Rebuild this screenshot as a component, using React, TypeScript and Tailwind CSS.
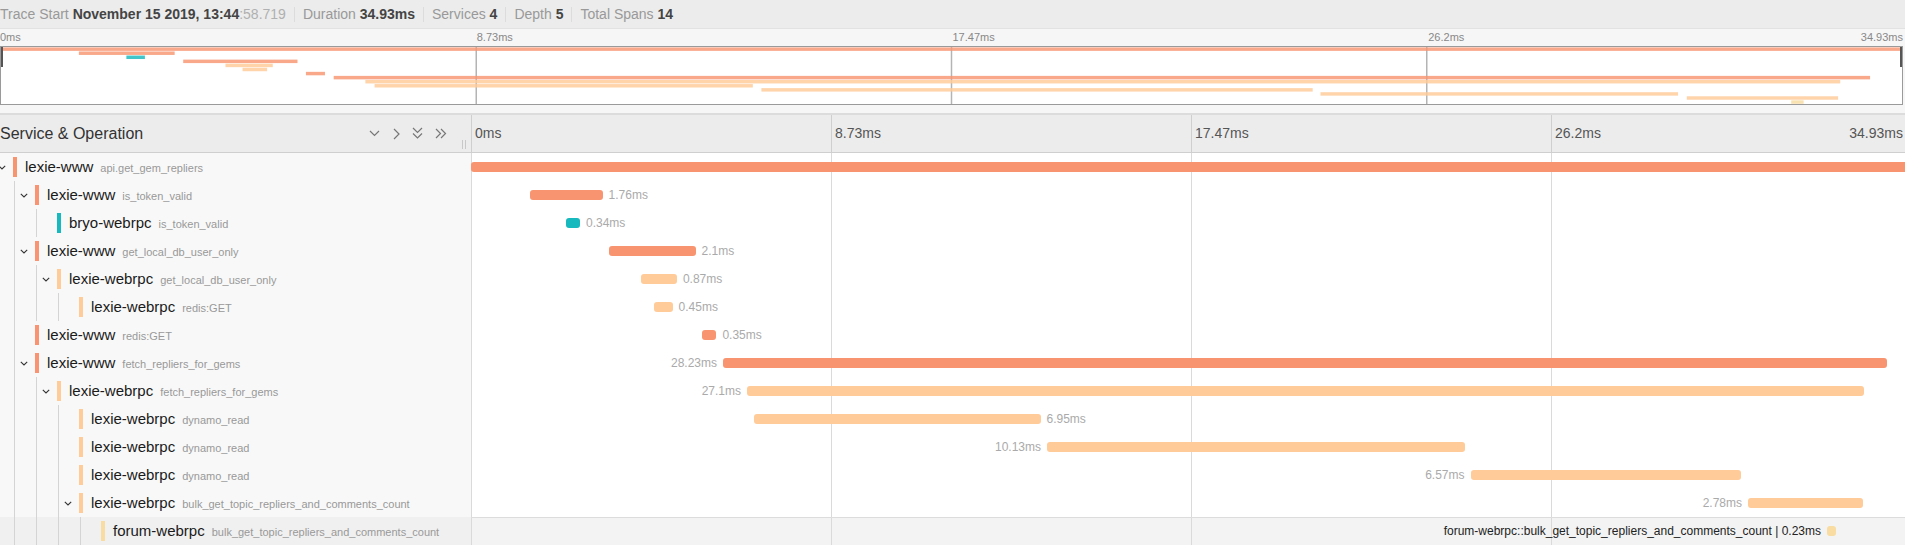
import React from 'react';

const TOTAL = 34.93;
const TL_W = 1440;
const PX = TL_W / TOTAL;
const MINI_W = 1901;
const MINI_H = 57;

const C_WWW = '#F89570';
const C_BRYO = '#17B8BE';
const C_RPC = '#FFCB99';
const C_FORUM = '#F8DCA1';

interface Span {
  svc: string;
  op: string;
  depth: number;
  start: number;
  dur: number;
  color: string;
  parent?: boolean;
  side: 'left' | 'right' | 'none' | 'hover';
}

const spans: Span[] = [
  { svc: 'lexie-www', op: 'api.get_gem_repliers', depth: 0, start: 0, dur: 34.93, color: C_WWW, parent: true, side: 'none' },
  { svc: 'lexie-www', op: 'is_token_valid', depth: 1, start: 1.431, dur: 1.76, color: C_WWW, parent: true, side: 'right' },
  { svc: 'bryo-webrpc', op: 'is_token_valid', depth: 2, start: 2.304, dur: 0.34, color: C_BRYO, side: 'right' },
  { svc: 'lexie-www', op: 'get_local_db_user_only', depth: 1, start: 3.348, dur: 2.1, color: C_WWW, parent: true, side: 'right' },
  { svc: 'lexie-webrpc', op: 'get_local_db_user_only', depth: 2, start: 4.124, dur: 0.87, color: C_RPC, parent: true, side: 'right' },
  { svc: 'lexie-webrpc', op: 'redis:GET', depth: 3, start: 4.439, dur: 0.45, color: C_RPC, side: 'right' },
  { svc: 'lexie-www', op: 'redis:GET', depth: 1, start: 5.603, dur: 0.35, color: C_WWW, side: 'right' },
  { svc: 'lexie-www', op: 'fetch_repliers_for_gems', depth: 1, start: 6.113, dur: 28.23, color: C_WWW, parent: true, side: 'left' },
  { svc: 'lexie-webrpc', op: 'fetch_repliers_for_gems', depth: 2, start: 6.695, dur: 27.1, color: C_RPC, parent: true, side: 'left' },
  { svc: 'lexie-webrpc', op: 'dynamo_read', depth: 3, start: 6.865, dur: 6.95, color: C_RPC, side: 'right' },
  { svc: 'lexie-webrpc', op: 'dynamo_read', depth: 3, start: 13.972, dur: 10.13, color: C_RPC, side: 'left' },
  { svc: 'lexie-webrpc', op: 'dynamo_read', depth: 3, start: 24.245, dur: 6.57, color: C_RPC, side: 'left' },
  { svc: 'lexie-webrpc', op: 'bulk_get_topic_repliers_and_comments_count', depth: 3, start: 30.976, dur: 2.78, color: C_RPC, parent: true, side: 'left' },
  { svc: 'forum-webrpc', op: 'bulk_get_topic_repliers_and_comments_count', depth: 4, start: 32.893, dur: 0.23, color: C_FORUM, side: 'hover' },
];

const ticks = ['0ms', '8.73ms', '17.47ms', '26.2ms'];

function fmt(ms: number) {
  return `${ms}ms`;
}

function Sep() {
  return <span className="mx-[8px] h-[15px] w-px bg-[#dcdcdc]" />;
}

function TraceHeader() {
  return (
    <div className="flex h-[29px] items-center border-b border-[#e2e2e2] bg-[#ececec] text-[14px] text-[#999] whitespace-nowrap">
      <span>
        Trace Start <b className="text-[#444]">November 15 2019, 13:44</b>
        <span className="text-[#b0b0b0]">:58.719</span>
      </span>
      <Sep />
      <span>
        Duration <b className="text-[#444]">34.93ms</b>
      </span>
      <Sep />
      <span>
        Services <b className="text-[#444]">4</b>
      </span>
      <Sep />
      <span>
        Depth <b className="text-[#444]">5</b>
      </span>
      <Sep />
      <span>
        Total Spans <b className="text-[#444]">14</b>
      </span>
    </div>
  );
}

function Minimap() {
  const rowH = MINI_H / spans.length;
  return (
    <div className="h-[85px] border-b border-[#dcdcdc] bg-[#f6f6f6]">
      <div className="grid h-[17px] w-[1903px] grid-cols-4 text-[11px] leading-[17px] text-[#888]">
        {ticks.map((t, i) => (
          <div key={t} className="flex justify-between pl-px">
            <span className={i === 0 ? '-ml-px' : ''}>{t}</span>
            {i === 3 && <span>34.93ms</span>}
          </div>
        ))}
      </div>
      <div className="w-[1903px] border border-[#9a9a9a] bg-white">
        <svg width={MINI_W} height={MINI_H} className="block">
          {[1, 2, 3].map((k) => (
            <line
              key={k}
              x1={(MINI_W * k) / 4}
              x2={(MINI_W * k) / 4}
              y1={0}
              y2={MINI_H}
              stroke="#b4b4b4"
              strokeWidth={1.5}
            />
          ))}
          {spans.map((s, i) => (
            <rect
              key={i}
              x={(s.start / TOTAL) * MINI_W}
              y={i * rowH + 0.4}
              width={Math.max(2, (s.dur / TOTAL) * MINI_W)}
              height={rowH - 0.6}
              fill={s.color}
              fillOpacity={0.82}
            />
          ))}
          <rect x={0} y={0} width={2} height={20} fill="#555" />
          <rect x={MINI_W - 2} y={0} width={2} height={20} fill="#555" />
        </svg>
      </div>
    </div>
  );
}

function IconDown() {
  return (
    <svg width="11" height="7" viewBox="0 0 11 7" fill="none" stroke="#777" strokeWidth="1.2">
      <path d="M1 1L5.5 5.5L10 1" />
    </svg>
  );
}

function IconRight() {
  return (
    <svg width="7" height="12" viewBox="0 0 7 12" fill="none" stroke="#777" strokeWidth="1.2">
      <path d="M1 1L6 6L1 11" />
    </svg>
  );
}

function IconDoubleDown() {
  return (
    <svg width="11" height="13" viewBox="0 0 11 13" fill="none" stroke="#777" strokeWidth="1.2">
      <path d="M1 1L5.5 5.5L10 1" />
      <path d="M1 6.5L5.5 11L10 6.5" />
    </svg>
  );
}

function IconDoubleRight() {
  return (
    <svg width="12" height="11" viewBox="0 0 12 11" fill="none" stroke="#777" strokeWidth="1.2">
      <path d="M1 1L5.5 5.5L1 10" />
      <path d="M6 1L10.5 5.5L6 10" />
    </svg>
  );
}

function TableHeader() {
  return (
    <div className="flex h-[38px] border-b border-[#cfcfcf] bg-[#ececec]">
      <div className="flex w-[471px] shrink-0 items-center">
        <span className="text-[16px] text-[#333]">Service &amp; Operation</span>
        <div className="ml-auto flex h-full items-center">
          <IconDown />
          <span className="ml-[13px]">
            <IconRight />
          </span>
          <span className="ml-[12px]">
            <IconDoubleDown />
          </span>
          <span className="ml-[12px]">
            <IconDoubleRight />
          </span>
          <span className="mb-[3px] ml-[15px] flex h-[9px] gap-[2px] self-end">
            <span className="w-px bg-[#c8c8c8]" />
            <span className="w-px bg-[#c8c8c8]" />
          </span>
          <span className="w-[5px]" />
        </div>
      </div>
      <div className="grid w-[1440px] shrink-0 grid-cols-4 text-[14px] text-[#555]">
        {ticks.map((t, i) => (
          <div key={t} className="flex items-center justify-between border-l border-[#cfcfcf] pl-[3px] pr-[8px]">
            <span>{t}</span>
            {i === 3 && <span>34.93ms</span>}
          </div>
        ))}
      </div>
    </div>
  );
}

function RowChevron() {
  return (
    <svg width="8" height="5" viewBox="0 0 8 5" fill="none" stroke="#333" strokeWidth="1.1">
      <path d="M0.8 0.8L4 4L7.2 0.8" />
    </svg>
  );
}

function TreeCell({ s }: { s: Span }) {
  const hover = s.side === 'hover';
  return (
    <div className={`flex h-[28px] w-[471px] shrink-0 overflow-hidden ${hover ? 'bg-[#f0f0f0]' : 'bg-[#f8f8f8]'}`}>
      <div className="-ml-[6px] flex h-full items-stretch">
        {Array.from({ length: s.depth }).map((_, k) => (
          <span key={k} className="w-[22px] shrink-0 pl-[20px]">
            <span className="block h-full w-px bg-[#d4d4d4]" />
          </span>
        ))}
        <span className="flex w-[16px] shrink-0 items-center justify-center">{s.parent && <RowChevron />}</span>
        <span className="ml-[3px] h-[20px] w-[4px] shrink-0 self-center" style={{ background: s.color }} />
        <span className="ml-[8px] flex items-baseline self-center whitespace-nowrap">
          <span className="text-[15px] leading-[28px] text-[#1a1a1a]">{s.svc}</span>
          <span className="ml-[7px] text-[11px] text-[#999]">{s.op}</span>
        </span>
      </div>
    </div>
  );
}

function TimelineCell({ s }: { s: Span }) {
  const hover = s.side === 'hover';
  const left = s.start * PX;
  const width = Math.max(s.dur * PX, 9);
  return (
    <div className={`relative h-[28px] w-[1440px] shrink-0 ${hover ? 'border-t border-[#dcdcdc] bg-[#f3f3f3]' : 'bg-white'}`}>
      <div className="absolute inset-0 grid grid-cols-4">
        {[0, 1, 2, 3].map((k) => (
          <div key={k} className="border-l border-[#dadada]" />
        ))}
      </div>
      <div
        className={`absolute h-[10px] rounded-[3px] ${hover ? 'top-[8px]' : 'top-[9px]'}`}
        style={{ left, width, background: s.color }}
      />
      {s.side === 'right' && (
        <span
          className="absolute top-0 flex h-full items-center whitespace-nowrap text-[12px] text-[#aaa]"
          style={{ left: left + width + 6 }}
        >
          {fmt(s.dur)}
        </span>
      )}
      {s.side === 'left' && (
        <span
          className="absolute top-0 flex h-full items-center whitespace-nowrap text-[12px] text-[#aaa]"
          style={{ right: TL_W - left + 6 }}
        >
          {fmt(s.dur)}
        </span>
      )}
      {hover && (
        <span
          className="absolute -top-px flex h-[28px] items-center whitespace-nowrap text-[12px] text-[#222]"
          style={{ right: TL_W - left + 6 }}
        >
          {s.svc}::{s.op} | {fmt(s.dur)}
        </span>
      )}
    </div>
  );
}

export default function App() {
  return (
    <div className="h-[545px] w-[1905px] overflow-hidden bg-white font-['Liberation_Sans',Arial,sans-serif]">
      <TraceHeader />
      <Minimap />
      <div className="w-[1911px] border-t border-[#dcdcdc]">
        <TableHeader />
        {spans.map((s, i) => (
          <div key={i} className="flex">
            <TreeCell s={s} />
            <TimelineCell s={s} />
          </div>
        ))}
      </div>
    </div>
  );
}
